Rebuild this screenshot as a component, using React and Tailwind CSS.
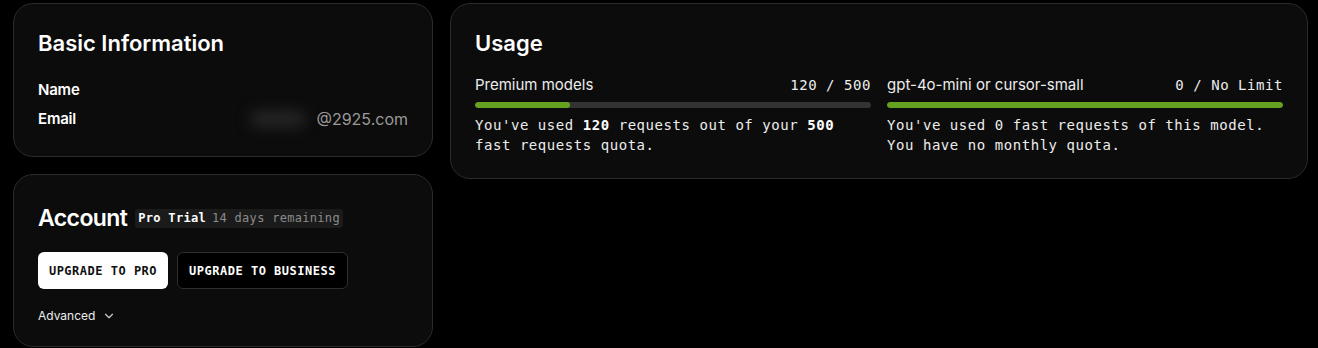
import { ChevronDown } from 'lucide-react';

const sans = { fontFamily: 'Inter, "Noto Sans", sans-serif' };
const mono = { fontFamily: '"DejaVu Sans Mono", "Liberation Mono", monospace' };

// one usage meter: label, count, bar and explanation
function Meter({ label, count, pct, children }) {
  return (
    <div className="flex-1 min-w-0">
      <div className="flex items-center justify-between h-5">
        <span className="text-[15px] text-[#ededed]" style={sans}>{label}</span>
        <span className="text-[14px] tracking-[0.55px] text-[#ededed]" style={mono}>{count}</span>
      </div>
      <div className="mt-[7px] h-[6px] rounded-full bg-[#333333] overflow-hidden">
        <div className="h-full rounded-full bg-[#65a21f]" style={{ width: `${pct}%` }} />
      </div>
      <p className="mt-[7px] text-[14px] leading-[20px] tracking-[0.55px] text-[#ededed]" style={mono}>
        {children}
      </p>
    </div>
  );
}

export default function App() {
  return (
    <div className="min-h-screen bg-black pl-[13px] pt-[3px] pr-[10px] flex gap-[17px] items-start" style={sans}>
      {/* left column */}
      <div className="w-[420px] shrink-0 flex flex-col gap-[17px]">
        <div className="rounded-[20px] border border-[#2b2b2b] bg-[#0c0c0c] px-6 pt-[25px] pb-[27px]">
          <h2 className="text-[22px] leading-[28px] font-semibold text-white">Basic Information</h2>
          <div className="mt-[23px] flex items-center h-5">
            <span className="text-[15px] font-semibold tracking-[-0.2px] text-white">Name</span>
          </div>
          <div className="mt-[9px] flex items-center justify-between h-5">
            <span className="text-[15px] font-semibold tracking-[-0.2px] text-white">Email</span>
            <span className="flex items-center text-[16px] text-[#9a9a9a]">
              <span className="inline-block w-[80px] h-[40px] relative">
                <span className="absolute left-[14px] top-[12px] w-[56px] h-[16px] rounded-full bg-[#262626] blur-[7px]" />
              </span>
              @2925.com
            </span>
          </div>
        </div>

        <div className="rounded-[20px] border border-[#2b2b2b] bg-[#0c0c0c] px-6 pt-[29px] pb-[22px]">
          <div className="flex items-center gap-[8px] h-[28px]">
            <h2 className="text-[23px] leading-[28px] font-semibold tracking-[-0.6px] text-white">Account</h2>
            <span className="rounded-[3px] bg-[#1b1b1b] px-[3px] h-[19px] flex items-center gap-[6px] text-[12px] tracking-[0.3px]" style={mono}>
              <span className="font-bold text-white">Pro Trial</span>
              <span className="text-[#8a8a8a]">14 days remaining</span>
            </span>
          </div>
          <div className="mt-[20px] flex gap-[9px]">
            <button className="h-[37px] w-[130px] rounded-[6px] bg-white text-[#111] text-[12px] tracking-[0.5px] font-bold" style={mono}>
              UPGRADE TO PRO
            </button>
            <button className="h-[37px] w-[171px] rounded-[6px] bg-black border border-[#2e2e2e] text-white text-[12px] tracking-[0.5px] font-bold" style={mono}>
              UPGRADE TO BUSINESS
            </button>
          </div>
          <div className="mt-[19px] flex items-center gap-[7px] h-4 text-[12px] text-[#ededed]">
            <span>Advanced</span>
            <ChevronDown size={14} strokeWidth={2} className="text-[#cfcfcf]" />
          </div>
        </div>
      </div>

      {/* usage card */}
      <div className="w-[858px] rounded-[20px] border border-[#2b2b2b] bg-[#0c0c0c] px-6 pt-[25px] pb-[23px]">
        <h2 className="text-[22px] leading-[28px] font-semibold text-white">Usage</h2>
        <div className="mt-[18px] flex gap-4">
          <Meter label="Premium models" count="120 / 500" pct={24}>
            You've used <b className="font-bold text-white">120</b> requests out of your <b className="font-bold text-white">500</b>
            <br />
            fast requests quota.
          </Meter>
          <Meter label="gpt-4o-mini or cursor-small" count="0 / No Limit" pct={100}>
            You've used 0 fast requests of this model.
            <br />
            You have no monthly quota.
          </Meter>
        </div>
      </div>
    </div>
  );
}
